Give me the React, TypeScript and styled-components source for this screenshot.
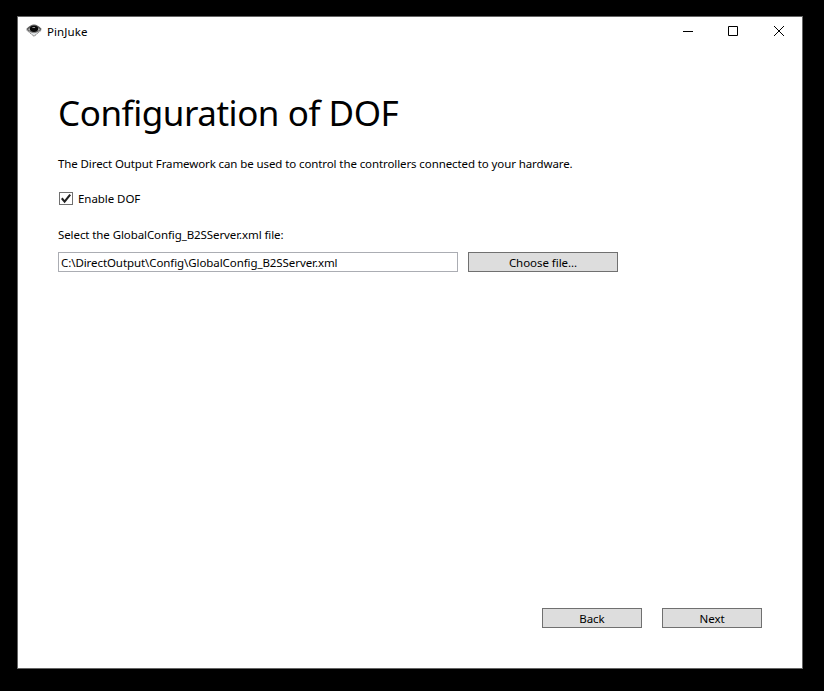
import React, { useState } from "react";
import styled, { createGlobalStyle } from "styled-components";

const GlobalStyle = createGlobalStyle`
  * { box-sizing: border-box; }
  html, body { margin: 0; background: #000; }
  body, button, input {
    font-family: "Noto Sans", "Open Sans", sans-serif;
    font-size: 11.5px;
    line-height: 16px;
    color: #000;
  }
`;

const Desktop = styled.div`
  width: 824px;
  height: 691px;
  padding: 16px 21px 22px 17px;
  background: #000;
`;

const Window = styled.main`
  height: 653px;
  display: flex;
  flex-direction: column;
  background: #fff;
  border: 1px solid #646464;
`;

const TitleBar = styled.header`
  height: 30px;
  display: flex;
  align-items: center;
  padding-left: 8px;
`;

const AppIcon = styled.svg`
  width: 16px;
  height: 16px;
  margin-bottom: 2px;
`;

const Title = styled.span`
  flex: 1;
  margin-left: 5px;
  letter-spacing: 0.1px;
`;

const CaptionButton = styled.button<{ $width?: number }>`
  width: ${(p) => p.$width ?? 46}px;
  height: 28px;
  margin-bottom: 2px;
  display: flex;
  align-items: center;
  justify-content: center;
  padding: 0;
  border: 0;
  background: transparent;

  svg { width: 12px; height: 12px; }
`;

const Page = styled.section`
  flex: 1;
  display: flex;
  flex-direction: column;
  padding: 42px 40px 40px;
`;

const Heading = styled.h1`
  margin: 0 0 19px;
  font-size: 35px;
  line-height: 48px;
  font-weight: 400;
  letter-spacing: -0.46px;
`;

const Paragraph = styled.p`
  margin: 0;
  letter-spacing: -0.1px;
`;

const CheckLabel = styled.label`
  display: flex;
  align-items: center;
  gap: 5px;
  height: 16px;
  margin: 19px 0 20px 1px;
  letter-spacing: -0.06px;
`;

const CheckBox = styled.button`
  width: 14px;
  height: 13px;
  margin-bottom: 1px;
  padding: 0;
  display: flex;
  border: 1px solid #707070;
  background: #fff;

  svg { width: 12px; height: 11px; }
`;

const FieldLabel = styled.label`
  letter-spacing: -0.09px;
`;

const FileRow = styled.div`
  display: flex;
  gap: 10px;
  margin-top: 9px;
`;

const PathInput = styled.input`
  width: 400px;
  height: 20px;
  padding: 0 2px;
  border: 1px solid #abadb3;
  border-radius: 0;
  outline: 0;
  background: #fff;
  letter-spacing: -0.08px;
`;

const PushButton = styled.button<{ $width: number }>`
  width: ${(p) => p.$width}px;
  height: 20px;
  padding: 2px 0 0;
  border: 1px solid #707070;
  border-radius: 0;
  background: #ddd;
  letter-spacing: -0.05px;
`;

const Footer = styled.footer`
  display: flex;
  justify-content: flex-end;
  gap: 20px;
  margin-top: auto;
`;

function PinJukeIcon() {
  return (
    <AppIcon viewBox="0 0 16 16" aria-hidden="true">
      <path d="M0.5 7 8 13.6 15.5 7 12 5H4Z" fill="#bcbcbc" />
      <path d="M0.5 7 8 13.3 15.5 7" fill="none" stroke="#858585" strokeWidth="1" strokeDasharray="1.5 .7" />
      <path d="M4 9.5 8 12.2 12 9.5 8 10.5Z" fill="#e9eef0" />
      <path d="M0.3 6C3 3 5.5 1.4 8 1.4s5 1.6 7.7 4.6C13 8.6 10.5 9.6 8 9.6S3 8.6.3 6Z" fill="#5c5c5c" />
      <path d="M2 6.2C4 4.8 6 4 8 4s4 .8 6 2.2C12 8 10 8.8 8 8.8S4 8 2 6.2Z" fill="#b0b0b0" />
      <ellipse cx="8" cy="5.8" rx="4.2" ry="3.1" fill="#080808" />
      <path d="M6.4 4.5h2.7" stroke="#a9a9a9" strokeWidth=".9" />
    </AppIcon>
  );
}

export default function App() {
  const [enabled, setEnabled] = useState(true);
  const [path, setPath] = useState("C:\\DirectOutput\\Config\\GlobalConfig_B2SServer.xml");

  return (
    <>
      <GlobalStyle />
      <Desktop>
        <Window>
          <TitleBar>
            <PinJukeIcon />
            <Title>PinJuke</Title>
            <CaptionButton $width={44} aria-label="Minimize">
              <svg viewBox="0 0 12 12"><path d="M1 6.5h10" stroke="#000" /></svg>
            </CaptionButton>
            <CaptionButton aria-label="Maximize">
              <svg viewBox="0 0 12 12"><path d="M1.5 1.5h9v9h-9z" fill="none" stroke="#000" /></svg>
            </CaptionButton>
            <CaptionButton aria-label="Close">
              <svg viewBox="0 0 12 12"><path d="m1 1 10 10M11 1 1 11" stroke="#000" /></svg>
            </CaptionButton>
          </TitleBar>
          <Page>
            <Heading>Configuration of DOF</Heading>
            <Paragraph>
              The Direct Output Framework can be used to control the controllers connected to your hardware.
            </Paragraph>
            <CheckLabel>
              <CheckBox role="checkbox" aria-checked={enabled} onClick={() => setEnabled(!enabled)}>
                {enabled && (
                  <svg viewBox="0 0 12 11">
                    <path d="M1.8 5.3 4.6 8.6 10.2 1.6" fill="none" stroke="#212121" strokeWidth="2.1" />
                  </svg>
                )}
              </CheckBox>
              Enable DOF
            </CheckLabel>
            <FieldLabel htmlFor="config-path">Select the GlobalConfig_B2SServer.xml file:</FieldLabel>
            <FileRow>
              <PathInput id="config-path" value={path} onChange={(e) => setPath(e.target.value)} />
              <PushButton $width={150}>Choose file...</PushButton>
            </FileRow>
            <Footer>
              <PushButton $width={100}>Back</PushButton>
              <PushButton $width={100}>Next</PushButton>
            </Footer>
          </Page>
        </Window>
      </Desktop>
    </>
  );
}
